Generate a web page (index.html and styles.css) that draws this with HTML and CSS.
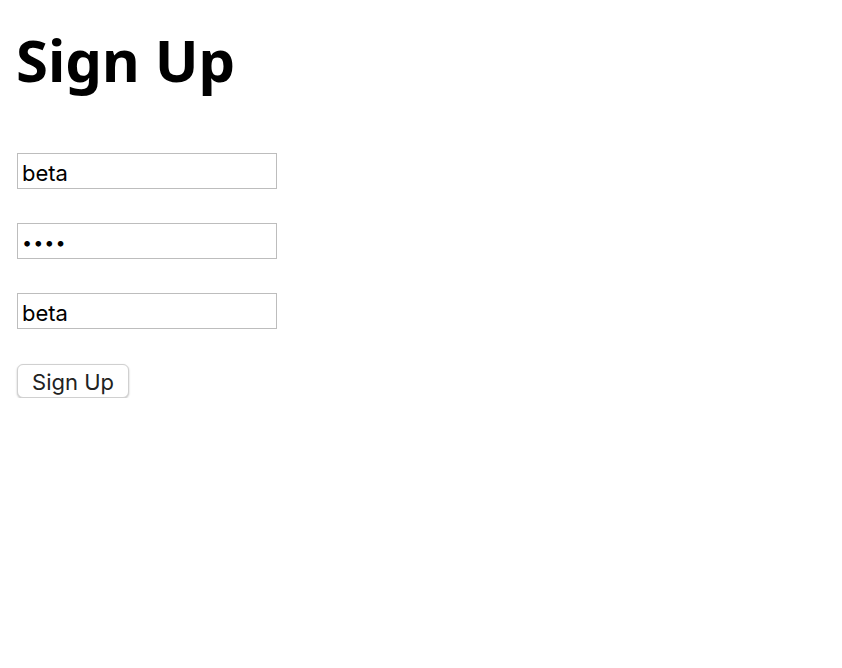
FILE: index.html
```html
<!DOCTYPE html>
<html lang="en">
<head>
<meta charset="utf-8">
<title>Sign Up</title>
<link rel="stylesheet" href="styles.css">
</head>
<body>
<main class="page">
  <h1 class="title">Sign Up</h1>
  <form class="form">
    <input class="field" type="text" value="beta">
    <input class="field field-pass" type="password" value="beta">
    <input class="field" type="text" value="beta">
    <button class="btn" type="button">Sign Up</button>
  </form>
</main>
</body>
</html>
```
FILE: styles.css
```css
html, body {
  margin: 0;
  padding: 0;
  background: #fff;
}
.page {
  padding: 24px 17px 0 16px;
}
.title {
  margin: 0;
  font-family: "Noto Sans", "Open Sans", sans-serif;
  font-weight: 700;
  font-size: 58px;
  line-height: 72px;
  color: #000;
}
.form {
  margin-top: 57px;
  display: flex;
  flex-direction: column;
  align-items: flex-start;
  gap: 34px;
  padding-left: 1px;
}
.field {
  box-sizing: border-box;
  width: 260px;
  height: 36px;
  margin: 0;
  padding: 3px 4px 0;
  border: 1px solid #bdbdbd;
  border-radius: 0;
  background: #fff;
  font-family: "Inter", "Noto Sans", sans-serif;
  font-size: 22px;
  color: #000;
  outline: none;
}
.field-pass {
  font-size: 18px;
  letter-spacing: 1px;
}
.form .btn {
  margin-top: 1px;
  box-sizing: border-box;
  width: 112px;
  height: 34px;
  padding: 2px 0 0;
  border: 1px solid #d0d0d0;
  border-radius: 6px;
  background: #fff;
  box-shadow: 0 1px 2px rgba(0,0,0,0.25);
  font-family: "Inter", "Noto Sans", sans-serif;
  font-size: 22px;
  color: #222;
}
```
